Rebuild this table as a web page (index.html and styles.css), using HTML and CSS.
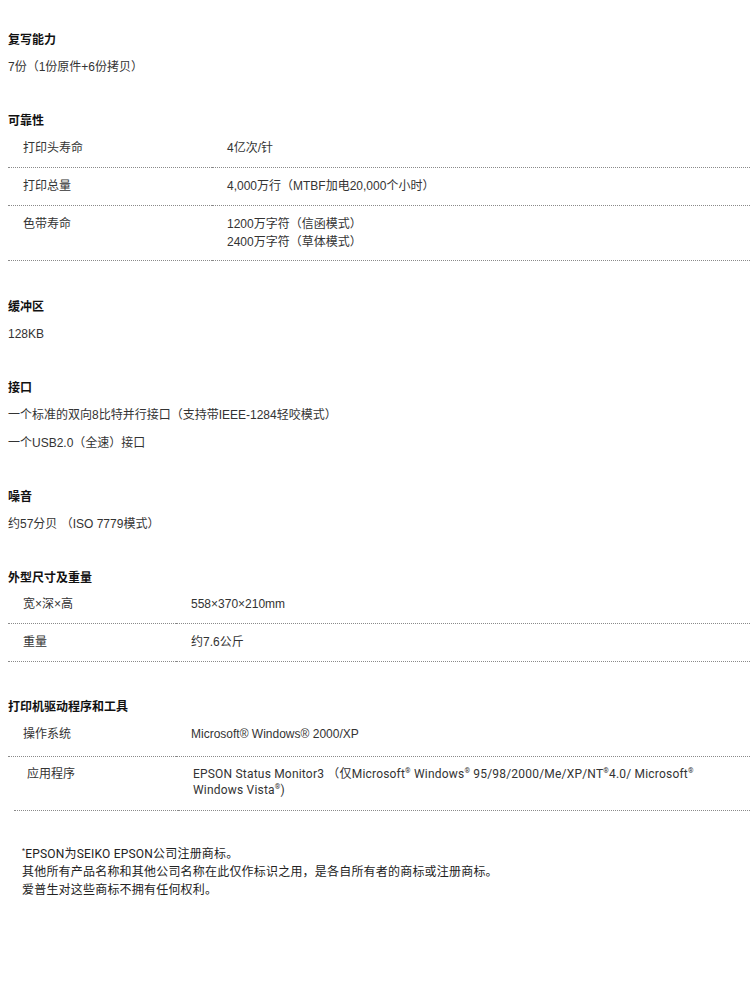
FILE: index.html
```html
<!DOCTYPE html>
<html lang="zh-CN">
<head>
  <meta charset="UTF-8">
  <meta name="viewport" content="width=device-width,initial-scale=1">
  <title>规格</title>
  <link rel="stylesheet" href="styles.css">
</head>
<body>
  <div class="specs">

    <!-- 复写能力 -->
    <section class="spec">
      <h3>复写能力</h3>
      <p>7份（1份原件+6份拷贝）</p>
    </section>

    <!-- 可靠性 -->
    <section class="spec with-table">
      <h3>可靠性</h3>
      <table class="spec-table wide">
        <tr><td>打印头寿命</td><td>4亿次/针</td></tr>
        <tr><td>打印总量</td><td>4,000万行（MTBF加电20,000个小时）</td></tr>
        <tr><td>色带寿命</td><td>1200万字符（信函模式）<br>2400万字符（草体模式）</td></tr>
      </table>
    </section>

    <section class="spec">
      <h3>缓冲区</h3>
      <p>128KB</p>
    </section>

    <section class="spec">
      <h3>接口</h3>
      <p>一个标准的双向8比特并行接口（支持带IEEE-1284轻咬模式）</p>
      <p>一个USB2.0（全速）接口</p>
    </section>

    <section class="spec">
      <h3>噪音</h3>
      <p>约57分贝 （ISO 7779模式）</p>
    </section>

    <section class="spec">
      <h3>外型尺寸及重量</h3>
      <table class="spec-table dims">
        <tr><td>宽×深×高</td><td>558×370×210mm</td></tr>
        <tr><td>重量</td><td>约7.6公斤</td></tr>
      </table>
    </section>

    <!-- 驱动 -->
    <section class="spec last">
      <h3>打印机驱动程序和工具</h3>
      <table class="spec-table drivers">
        <tr><td>操作系统</td><td>Microsoft® Windows® 2000/XP</td></tr>
      </table>
      <table class="spec-table apps">
        <tr><td>应用程序</td><td>EPSON Status Monitor3 （仅Microsoft<sup>®</sup> Windows<sup>®</sup> 95/98/2000/Me/XP/NT<sup>®</sup>4.0/ Microsoft<sup>®</sup> Windows Vista<sup>®</sup>)</td></tr>
      </table>
    </section>

    <div class="notes">
      <p><sup>*</sup>EPSON为SEIKO EPSON公司注册商标。</p>
      <p>其他所有产品名称和其他公司名称在此仅作标识之用，是各自所有者的商标或注册商标。</p>
      <p>爱普生对这些商标不拥有任何权利。</p>
    </div>

  </div>
</body>
</html>
```

FILE: styles.css
```css
*{margin:0;padding:0;box-sizing:border-box;}
body{
  background:#fff;
  color:#333;
  font-family:"Liberation Sans","Noto Sans CJK SC",sans-serif;
  font-size:12px;
  line-height:18px;
}
.specs{padding:31px 0 40px 8px;}
.spec{margin-bottom:36px;}
.spec.with-table{margin-bottom:37px;}
.spec.last{margin-bottom:34px;}
.spec h3{
  font-size:12px; font-weight:bold; color:#111;
  line-height:18px; margin-bottom:9px;
}
.spec p{margin-bottom:10px;}
.spec p:last-child{margin-bottom:0;}
.spec h3 + .spec-table{margin-top:-9px;}
.spec h3 + .spec-table.dims{margin-top:-10px;}
/* tablas */
.spec-table{width:100%;border-collapse:collapse;}
.spec-table td{
  vertical-align:top;
  padding:9px 15px 10px;
  border-bottom:1px dotted #8a8a8a;
}
.spec-table.wide tr:last-child td{padding-bottom:9px;}
.spec-table td:first-child{width:168px;}
.spec-table.wide td:first-child{width:204px;}
.spec-table.drivers td{padding-bottom:13px;}
.spec-table.apps{
  width:calc(100% - 6px);
  margin-left:6px;
}
.spec-table.apps td{
  font-family:Roboto,"Noto Sans CJK SC",sans-serif;
  line-height:16px;
  letter-spacing:.2px;
  padding:9px 13px 12px;
}
.spec-table.apps td:first-child{width:164px;letter-spacing:0;}
.spec-table.apps td:last-child{padding-left:15px;padding-right:40px;}
sup{font-size:7px;line-height:0;vertical-align:5px;}
.notes{
  padding-left:14px;
  font-family:Roboto,"Noto Sans CJK SC",sans-serif;
  letter-spacing:.2px;
  color:#222;
}
```
